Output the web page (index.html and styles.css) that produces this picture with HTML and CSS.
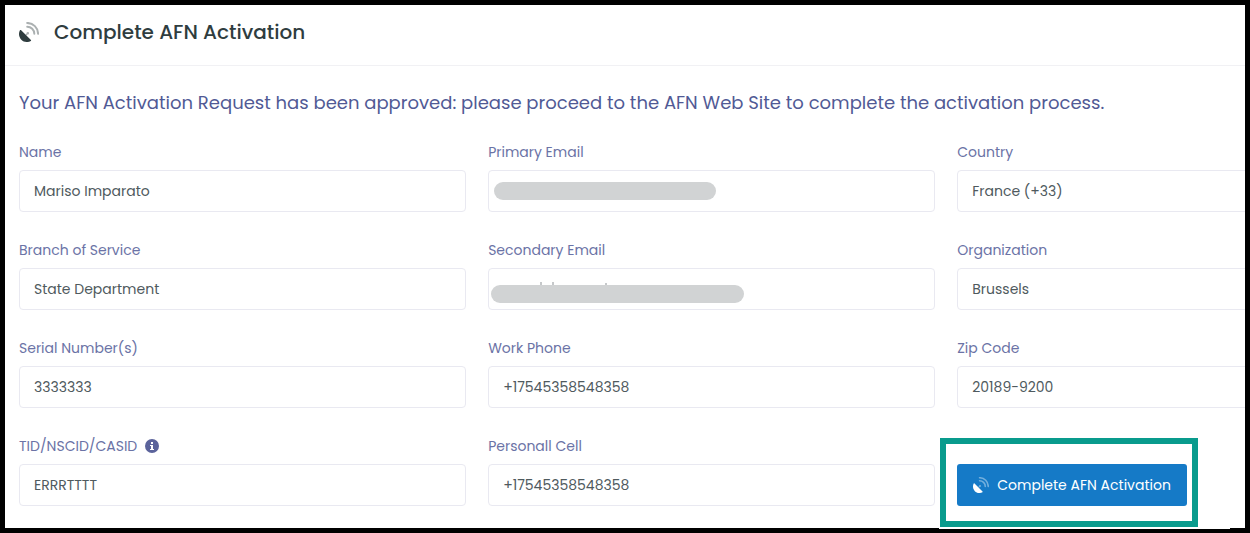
FILE: index.html
```html
<!DOCTYPE html>
<html lang="en">
<head>
    <meta charset="UTF-8">
    <meta name="viewport" content="width=device-width, initial-scale=1.0">
    <title>Complete AFN Activation</title>
    <link rel="stylesheet" href="styles.css">
</head>
<body>
    <!-- Satellite dish, used in the header and in the button -->
    <svg class="sprite" aria-hidden="true">
        <symbol id="dish" viewBox="0 0 512 512">
            <path fill="currentColor" d="M305 463c8 7 6 20-3 25-78 42-177 30-243-36C-6 386-17 287 24 210c5-9 18-11 25-4l128 128z"/>
            <g opacity="0.4">
                <path fill="currentColor" d="M166 323l28-27a32 32 0 1 1 23 23l-28 27z"/>
                <g fill="none" stroke="currentColor" stroke-width="50" stroke-linecap="round">
                    <path d="M210 120a182 182 0 0 1 182 182"/>
                    <path d="M210 24a278 278 0 0 1 278 278"/>
                </g>
            </g>
        </symbol>
    </svg>

    <main class="panel">
        <header class="panel-header">
            <svg class="header-icon" aria-hidden="true"><use href="#dish"/></svg>
            <h1>Complete AFN Activation</h1>
        </header>

        <form class="panel-body">
            <h2>Your AFN Activation Request has been approved: please proceed to the AFN Web Site to complete the activation process.</h2>

            <div class="fields">
                <div class="field">
                    <label for="name">Name</label>
                    <input type="text" id="name" value="Mariso Imparato" readonly>
                </div>
                <div class="field">
                    <label for="primary-email">Primary Email</label>
                    <input type="text" id="primary-email" readonly>
                    <span class="mask mask-primary"></span>
                </div>
                <div class="field">
                    <label for="country">Country</label>
                    <input type="text" id="country" value="France (+33)" readonly>
                </div>

                <div class="field">
                    <label for="branch">Branch of Service</label>
                    <input type="text" id="branch" value="State Department" readonly>
                </div>
                <div class="field">
                    <label for="secondary-email">Secondary Email</label>
                    <input type="text" id="secondary-email" readonly>
                    <span class="mask mask-secondary">
                        <svg class="mask-specks" viewBox="0 0 72 3" aria-hidden="true">
                            <path d="M2 0v3M14 0v3M67 1v2" stroke="#8d9296" fill="none"/>
                        </svg>
                    </span>
                </div>
                <div class="field">
                    <label for="organization">Organization</label>
                    <input type="text" id="organization" value="Brussels" readonly>
                </div>

                <div class="field">
                    <label for="serial">Serial Number(s)</label>
                    <input type="text" id="serial" value="3333333" readonly>
                </div>
                <div class="field">
                    <label for="work-phone">Work Phone</label>
                    <input type="text" id="work-phone" value="+17545358548358" readonly>
                </div>
                <div class="field">
                    <label for="zip">Zip Code</label>
                    <input type="text" id="zip" value="20189-9200" readonly>
                </div>

                <div class="field">
                    <label for="tid">TID/NSCID/CASID
                        <svg class="info-icon" viewBox="0 0 14 14" aria-hidden="true">
                            <circle cx="7" cy="7" r="7" fill="currentColor"/>
                            <path fill="#fff" d="M6 3h2v2H6zM5 6h3v4h1v1H5v-1h1V7H5z"/>
                        </svg>
                    </label>
                    <input type="text" id="tid" value="ERRRTTTT" readonly>
                </div>
                <div class="field">
                    <label for="cell">Personall Cell</label>
                    <input type="text" id="cell" value="+17545358548358" readonly>
                </div>
                <div class="action">
                    <div class="callout">
                        <button type="submit">
                            <svg class="button-icon" aria-hidden="true"><use href="#dish"/></svg>
                            Complete AFN Activation
                        </button>
                    </div>
                </div>
            </div>
        </form>
    </main>
</body>
</html>
```

FILE: styles.css
```css
* {
    box-sizing: border-box;
}

body {
    font-family: Poppins, Inter, sans-serif;
    margin: 0;
    background-color: #fff;
}

.sprite {
    display: none;
}

.panel {
    min-height: 100vh;
    border: 5px solid #000;
    overflow-x: clip;
}

.panel-header {
    display: flex;
    align-items: center;
    gap: 15px;
    height: 61px;
    padding: 0 14px 6px;
    border-bottom: 1px solid #f1f1f4;
    color: #2f3d3f;
}

.header-icon {
    width: 20px;
    height: 20px;
}

h1 {
    margin: 0;
    font-size: 20px;
    line-height: 30px;
    font-weight: 500;
}

.panel-body {
    padding: 25px 0 0 14px;
}

h2 {
    margin: 0 0 27px;
    color: #515a95;
    font-size: 18px;
    line-height: 24px;
    font-weight: 400;
    white-space: nowrap;
}

/* The third column runs past the right edge of the panel */
.fields {
    display: grid;
    grid-template-columns: repeat(3, 1fr);
    gap: 28px 22px;
    width: 113%;
}

.field {
    position: relative;
}

label {
    display: flex;
    align-items: center;
    gap: 8px;
    margin-bottom: 8px;
    color: #6b73a6;
    font-size: 14px;
    line-height: 20px;
}

.info-icon {
    width: 14px;
    height: 14px;
    color: #5b639b;
}

input {
    display: block;
    width: 100%;
    height: 42px;
    padding: 0 14px;
    border: 1px solid #e9e9f1;
    border-radius: 4px;
    outline: none;
    background-color: #fff;
    color: #4f5a5e;
    font-family: inherit;
    font-size: 14px;
}

.mask {
    position: absolute;
    height: 18px;
    border-radius: 9px;
    background-color: #d1d3d4;
}

.mask-primary {
    top: 40px;
    left: 6px;
    width: 222px;
}

.mask-secondary {
    top: 45px;
    left: 3px;
    width: 253px;
}

.mask-specks {
    position: absolute;
    top: -3px;
    left: 48px;
    width: 72px;
    height: 3px;
}

.action {
    padding-top: 28px;
}

.callout {
    position: relative;
    width: fit-content;
}

.callout::before {
    content: "";
    position: absolute;
    top: -26px;
    right: -11px;
    bottom: -21px;
    left: -17px;
    border: 6px solid #099b8d;
    pointer-events: none;
}

.callout::after {
    content: "";
    position: absolute;
    right: -43px;
    bottom: -23px;
    left: -18px;
    height: 2px;
    background-color: #fff;
}

button {
    display: flex;
    align-items: center;
    gap: 8px;
    height: 42px;
    padding: 0 16px;
    border: none;
    border-radius: 3px;
    background-color: #157ac7;
    color: #fff;
    font-family: inherit;
    font-size: 14px;
    white-space: nowrap;
    cursor: pointer;
}

.button-icon {
    width: 16px;
    height: 16px;
}
```
